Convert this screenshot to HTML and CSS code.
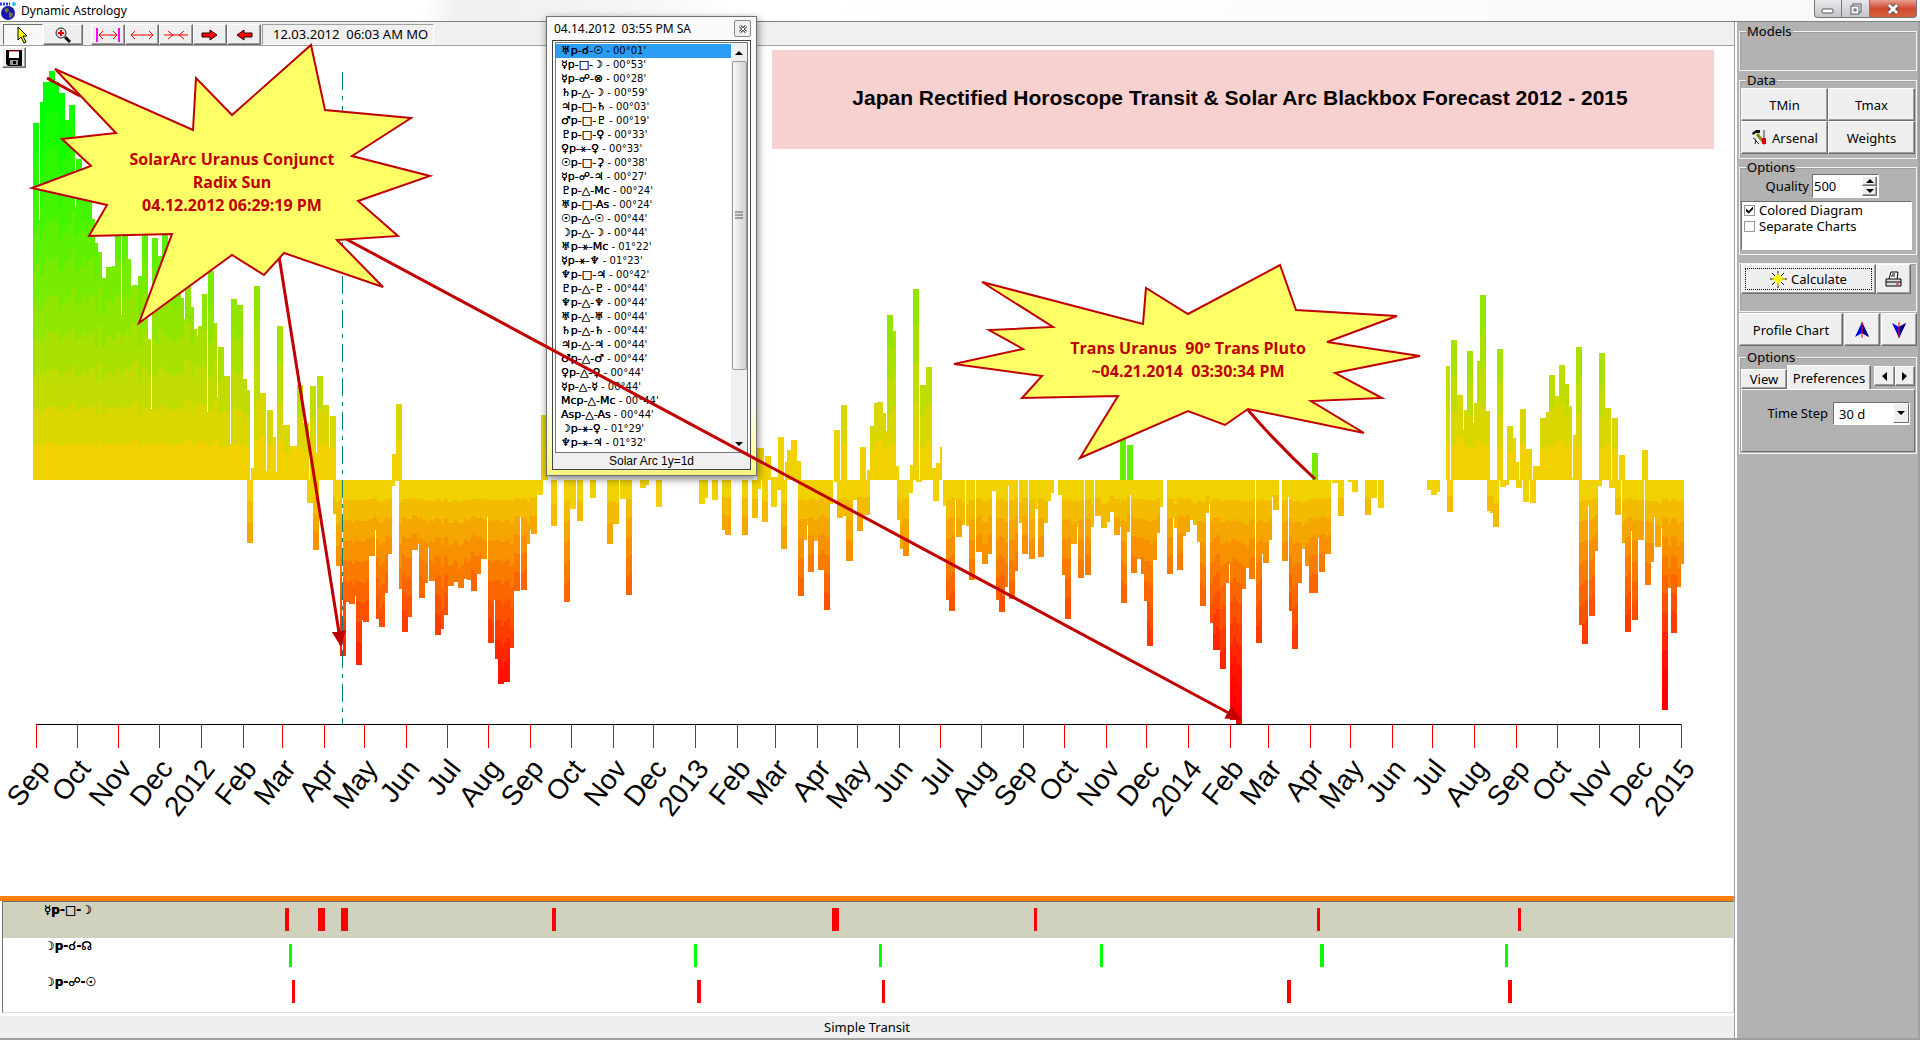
FILE: index.html
```html
<!DOCTYPE html>
<html lang="en">
  <head>
    <meta charset="utf-8">
    <meta name="viewport" content="width=device-width, initial-scale=1">
    <title>Dynamic Astrology</title>
    <link rel="stylesheet" href="styles.css">
    <script src="chart.js" defer></script>
  </head>
  <body>
    <header class="titlebar">
      <svg class="app-icon" width="16" height="18" viewBox="0 0 16 18"><circle cx="8" cy="11" r="7" fill="#1414b8"/><path d="M4 7l4-1 1 3-3 2zM9 10l4 1-1 4-3 1z" fill="#7a7a20"/><path d="M0 2h10" stroke="#2a40e0" stroke-width="3" stroke-dasharray="2 1"/><circle cx="14" cy="2" r="2" fill="#20c8f0"/></svg>
      <span class="app-name">Dynamic Astrology</span>
      <div class="window-buttons">
        <button type="button" aria-label="Minimize"><svg width="14" height="12" viewBox="0 0 14 12"><rect x="1" y="6" width="11" height="4" rx="1" fill="#fff" stroke="#556"/></svg></button>
        <button type="button" aria-label="Restore"><svg width="14" height="12" viewBox="0 0 14 12"><rect x="4" y="1" width="8" height="8" fill="#fff" stroke="#556"/><rect x="2" y="3" width="8" height="8" fill="#fff" stroke="#556"/><rect x="5" y="6" width="2" height="2" fill="none" stroke="#556"/></svg></button>
        <button type="button" class="close" aria-label="Close"><svg width="14" height="12" viewBox="0 0 14 12"><path d="M3 2l8 8M11 2l-8 8" stroke="#544" stroke-width="5"/><path d="M3 2l8 8M11 2l-8 8" stroke="#fff" stroke-width="3"/></svg></button>
      </div>
    </header>
    <div class="workspace">
      <main class="main">
        <div class="toolbar">
          <button type="button" class="tool wide pressed" aria-label="Select"><svg width="12" height="18" viewBox="0 0 12 18"><path d="M1 1v13l3-3 3 6 2-1-3-6h4z" fill="#ff0" stroke="#000"/></svg></button>
          <button type="button" class="tool wide" aria-label="Zoom"><svg width="18" height="18" viewBox="0 0 18 18"><circle cx="7" cy="7" r="5" fill="#ddd" stroke="#222"/><path d="M7 4v6M4 7h6" stroke="#e00" stroke-width="2"/><path d="M11 11l5 5" stroke="#111" stroke-width="3"/></svg></button>
          <span class="tool-gap"></span>
          <button type="button" class="tool" aria-label="Fit range"><svg width="26" height="16" viewBox="0 0 26 16"><path d="M2 1v14M24 1v14" stroke="#f0f" stroke-width="2"/><path d="M4 8h18M8 4L4 8l4 4M18 4l4 4-4 4" fill="none" stroke="#f00"/></svg></button>
          <button type="button" class="tool" aria-label="Expand"><svg width="26" height="16" viewBox="0 0 26 16"><path d="M2 8h22M6 4L2 8l4 4M20 4l4 4-4 4" fill="none" stroke="#f00"/></svg></button>
          <button type="button" class="tool" aria-label="Shrink"><svg width="26" height="16" viewBox="0 0 26 16"><path d="M1 8h24M5 4l5 4-5 4M21 4l-5 4 5 4" fill="none" stroke="#f00"/></svg></button>
          <button type="button" class="tool" aria-label="Next"><svg width="18" height="12" viewBox="0 0 18 12"><path d="M1 4h8V1l7 5-7 5V8H1z" fill="#f00" stroke="#200"/></svg></button>
          <button type="button" class="tool" aria-label="Previous"><svg width="18" height="12" viewBox="0 0 18 12"><path d="M17 4H9V1L2 6l7 5V8h8z" fill="#f00" stroke="#200"/></svg></button>
          <div class="cursor-date">12.03.2012&nbsp; 06:03 AM MO</div>
        </div>
        <section class="diagram">
          <svg class="plot" id="plot" viewBox="0 46 1734 850" preserveAspectRatio="xMinYMin meet"></svg>
          <button type="button" class="tool save" aria-label="Save"><svg width="16" height="16" viewBox="0 0 16 16"><path d="M0 0h16v16H2l-2-2z" fill="#000"/><rect x="3" y="1" width="10" height="7" fill="#fff"/><path d="M3 1h10" stroke="#c00"/><rect x="4" y="10" width="8" height="5" fill="#999"/><rect x="7" y="11" width="3" height="3" fill="#000"/></svg></button>
          <h1 class="banner">Japan Rectified Horoscope Transit &amp; Solar Arc Blackbox Forecast 2012 - 2015</h1>
          <svg class="notes" viewBox="0 46 1734 850" preserveAspectRatio="xMinYMin meet">
            <defs>
              <marker id="tip" markerUnits="userSpaceOnUse" markerWidth="16" markerHeight="14" refX="14" refY="7" orient="auto"><path d="M0 0l16 7-16 7z" fill="#c00000"/></marker>
            </defs>
            <g class="pointer">
              <path d="M47 78L80 96"/>
              <path d="M279 256L341 645" marker-end="url(#tip)"/>
              <path d="M346 239L1240 719" marker-end="url(#tip)"/>
              <path d="M1248 410Q1278 445 1315 479"/>
            </g>
            <polygon class="burst" points="311,45 325,110 411,118 352,156 430,176 358,201 398,236 337,240 383,287 284,253 264,275 232,255 139,323 172,234 89,236 107,205 32,188 91,166 62,139 116,133 55,69 193,130 196,78 232,115"/>
            <polygon class="burst" points="1280,265 1296,310 1397,316 1327,342 1420,356 1335,373 1382,398 1311,401 1364,433 1248,409 1225,425 1188,411 1080,458 1118,396 1022,398 1042,376 954,364 1023,349 989,330 1053,327 982,282 1143,324 1146,288 1188,314"/>
            <g class="burst-text">
              <text x="232" y="165">SolarArc Uranus Conjunct</text>
              <text x="232" y="188">Radix Sun</text>
              <text x="232" y="211">04.12.2012 06:29:19 PM</text>
              <text x="1188" y="354">Trans Uranus &#160;90° Trans Pluto</text>
              <text x="1188" y="377">~04.21.2014 &#160;03:30:34 PM</text>
            </g>
          </svg>
        </section>
        <div class="splitter"></div>
        <section class="tracks" id="tracks"></section>
        <footer class="status">Simple Transit</footer>
      </main>

      <aside class="side">
        <fieldset class="group models"><legend>Models</legend></fieldset>
        <fieldset class="group data"><legend>Data</legend>
          <div class="button-grid">
            <button type="button">TMin</button>
            <button type="button">Tmax</button>
            <button type="button"><svg width="17" height="17" viewBox="0 0 17 17"><path d="M1 4l4-3h4v3H5L2 6z" fill="#111"/><path d="M6 5l8 10" stroke="#8a8a10" stroke-width="3"/><path d="M13 1v9" stroke="#333"/><path d="M13 9v6" stroke="#d00" stroke-width="4"/><path d="M2 9l3 2-1 4M4 11l4 4" stroke="#222" fill="none"/></svg>Arsenal</button>
            <button type="button">Weights</button>
          </div>
        </fieldset>
        <fieldset class="group options"><legend>Options</legend>
          <div class="quality">
            <label for="quality">Quality</label>
            <span class="spin">
              <input id="quality" type="text" value="500">
              <span class="spin-buttons">
                <button type="button" aria-label="Increase"><svg width="8" height="4" viewBox="0 0 8 4"><path d="M4 0l4 4H0z"/></svg></button>
                <button type="button" aria-label="Decrease"><svg width="8" height="4" viewBox="0 0 8 4"><path d="M0 0h8L4 4z"/></svg></button>
              </span>
            </span>
          </div>
          <div class="checks">
            <label><input type="checkbox" checked>Colored Diagram</label>
            <label><input type="checkbox">Separate Charts</label>
          </div>
        </fieldset>
        <div class="group run">
          <button type="button" class="calculate"><svg width="17" height="17" viewBox="0 0 17 17"><path d="M8 0v17M0 8h17M2 2l12 12M14 2L2 14" stroke="#111"/><path d="M8 2v13M2 8h13" stroke="#ff0"/><circle cx="8" cy="8" r="4" fill="#ff0"/></svg>Calculate</button>
          <button type="button" class="print" aria-label="Print"><svg width="17" height="17" viewBox="0 0 17 17"><path d="M4 8l2-7h7l-1 7" fill="#fff" stroke="#000"/><path d="M7 3h3M6 5h4" stroke="#000"/><path d="M1 8h15v7H1z" fill="#ddd" stroke="#000"/><path d="M1 11h15" stroke="#000"/><path d="M11 13h3" stroke="#d00"/></svg></button>
        </div>
        <div class="profile">
          <button type="button">Profile Chart</button>
          <button type="button" aria-label="Up"><svg width="16" height="18" viewBox="0 0 16 18"><path d="M8 1l7 15-7-4-7 4z" fill="#00f"/><path d="M8 1l7 15-7-4z" fill="#000080"/><path d="M8 1v16" stroke="#f00"/></svg></button>
          <button type="button" aria-label="Down"><svg width="16" height="18" viewBox="0 0 16 18"><path d="M8 17l7-15-7 4-7-4z" fill="#00f"/><path d="M8 17l7-15-7 4z" fill="#000080"/><path d="M8 1v16" stroke="#f00"/></svg></button>
        </div>
        <fieldset class="group prefs"><legend>Options</legend>
          <div class="tabs">
            <button type="button" class="tab">View</button>
            <button type="button" class="tab active">Preferences</button>
            <button type="button" class="arrow" aria-label="Scroll left"><svg width="5" height="9" viewBox="0 0 5 9"><path d="M5 0v9L0 4z"/></svg></button>
            <button type="button" class="arrow" aria-label="Scroll right"><svg width="5" height="9" viewBox="0 0 5 9"><path d="M0 0v9l5-5z"/></svg></button>
          </div>
          <div class="tab-page">
            <label for="step">Time Step</label>
            <span class="combo">
              <select id="step"><option>30 d</option></select>
              <span class="combo-arrow"><svg width="8" height="4" viewBox="0 0 8 4"><path d="M0 0h8L4 4z"/></svg></span>
            </span>
          </div>
        </fieldset>
      </aside>
    </div>

    <section class="aspects">
      <header class="aspects-head"><span>04.14.2012&nbsp; 03:55 PM SA</span><button type="button" aria-label="Close list"><svg width="8" height="8" viewBox="0 0 8 8"><path d="M1 1l6 6M7 1L1 7" stroke="#555" stroke-width="3"/><path d="M1 1l6 6M7 1L1 7" stroke="#fff"/></svg></button></header>
      <div class="aspects-body">
        <div class="aspects-view">
          <ul class="aspects-list" id="aspects"></ul>
          <div class="scrollbar"><svg width="8" height="4" viewBox="0 0 8 4"><path d="M4 0l4 4H0z"/></svg><div class="thumb"><svg width="8" height="9" viewBox="0 0 8 9"><path d="M0 1h8M0 4h8M0 7h8" stroke="#555"/></svg></div><svg width="8" height="4" viewBox="0 0 8 4"><path d="M0 0h8L4 4z"/></svg></div>
        </div>
        <footer class="aspects-foot">Solar Arc 1y=1d</footer>
      </div>
    </section>
  </body>
</html>
```

FILE: styles.css
```css
:root {
  --face: #efefef;
  --side: #b2b2b2;
  --dark: #6d6d6d;
  --mid: #a0a0a0;
  --accent: #c00000;
}
* {
  box-sizing: border-box;
}
body {
  display: flex;
  flex-direction: column;
  height: 100vh;
  margin: 0;
  overflow: hidden;
  font-family: Tahoma, "Noto Sans", sans-serif;
  font-size: 13px;
  line-height: 16px;
  color: #000;
  background-color: #fff;
}
button,
input,
select {
  margin: 0;
  padding: 0;
  font: inherit;
  color: #000;
}
button {
  display: flex;
  align-items: center;
  justify-content: center;
  gap: 4px;
  background-color: var(--face);
  border: 1px solid;
  border-color: #fff var(--dark) var(--dark) #fff;
  box-shadow: inset -1px -1px var(--mid);
}
.titlebar {
  display: flex;
  gap: 5px;
  height: 22px;
  padding-right: 3px;
  background: linear-gradient(100deg, #fff 0, #fff 22%, #f0f0f0 24%, #f4f4f4 32%, #fff 38%, #f8f8f8 100%);
  border-bottom: 1px solid #808080;
}
.app-icon {
  margin-top: 2px;
}
.app-name {
  flex: 1;
  font-size: 12px;
  line-height: 22px;
}
.window-buttons {
  display: flex;
  height: 18px;
}
.window-buttons button {
  width: 28px;
  background: linear-gradient(#e8e8ea, #c4c6ca);
  border-color: #777;
  border-top: 0;
  border-radius: 0 0 0 4px;
  box-shadow: none;
}
.window-buttons button + button {
  border-left: 0;
  border-radius: 0;
}
.window-buttons .close {
  width: 47px;
  background: linear-gradient(#e8a090, #d04a30 50%, #d8603c);
  border-radius: 0 0 4px 0;
}
.workspace {
  display: flex;
  flex: 1;
  min-height: 0;
}
.main {
  display: flex;
  flex: 1;
  flex-direction: column;
  min-width: 0;
}
.toolbar {
  display: flex;
  height: 24px;
  padding: 2px 0 0 3px;
  background-color: #f0f0f0;
  border-bottom: 1px solid var(--mid);
}
.tool {
  width: 34px;
  height: 21px;
}
.tool.wide {
  width: 40px;
}
.tool.pressed {
  background-color: #f8f8f8;
  border-color: var(--dark) #fff #fff var(--dark);
  box-shadow: none;
}
.tool-gap {
  width: 8px;
}
.cursor-date {
  width: 172px;
  margin-left: 1px;
  padding-left: 10px;
  line-height: 18px;
  border: 1px solid;
  border-color: var(--mid) #fff #fff var(--mid);
}
.diagram {
  position: relative;
  flex: 1;
  min-height: 0;
}
.plot,
.notes {
  display: block;
  width: 100%;
  height: 100%;
}
.plot {
  shape-rendering: crispEdges;
}
.plot text {
  font-family: Arial, "Liberation Sans", sans-serif;
  font-size: 28px;
  text-anchor: end;
}
.notes {
  position: absolute;
  z-index: 3;
  top: 0;
  left: 0;
  overflow: visible;
  pointer-events: none;
}
.pointer {
  fill: none;
  stroke: var(--accent);
  stroke-width: 3;
}
.burst {
  fill: #ffff66;
  stroke: var(--accent);
  stroke-width: 2;
}
.burst-text {
  font-family: "Comic Sans MS", "Open Sans", sans-serif;
  font-size: 16px;
  font-weight: bold;
  text-anchor: middle;
  fill: var(--accent);
}
.save {
  position: absolute;
  top: 1px;
  left: 2px;
  width: 24px;
}
.banner {
  position: absolute;
  top: 4px;
  right: 20px;
  width: 942px;
  margin: 0;
  padding: 36px 6px 39px 0;
  font-family: Arial, "Liberation Sans", sans-serif;
  font-size: 21px;
  line-height: 24px;
  text-align: center;
  background-color: #f7d0d0;
}
.splitter {
  height: 5px;
  background-color: #ff8000;
}
.tracks {
  margin-left: 2px;
  padding-bottom: 2px;
  border: 1px solid;
  border-color: var(--dark) #ddd #ddd var(--dark);
}
.track {
  position: relative;
  height: 36px;
  padding-left: 41px;
  font-family: "DejaVu Sans", sans-serif;
  font-size: 12px;
  font-weight: bold;
  text-shadow: 0 0 #000;
}
.track.selected {
  background-color: #d0d2be;
}
.track svg {
  position: absolute;
  top: 0;
  left: 0;
  width: 100%;
  height: 100%;
}
.status {
  height: 24px;
  margin-top: 3px;
  line-height: 22px;
  text-align: center;
  background-color: var(--face);
  border-bottom: 2px solid var(--mid);
}
.side {
  display: flex;
  flex-direction: column;
  width: 186px;
  padding: 1px 1px 0 4px;
  background-color: var(--side);
  border: 2px solid var(--mid);
  border-width: 0 2px 2px 1px;
  box-shadow: inset 2px 0 #fff;
}
.group {
  min-width: 0;
  margin: 0 0 9px;
  padding: 0 1px;
  border: 1px solid #f4f4f4;
  box-shadow: inset 1px 1px var(--mid);
}
.group legend {
  height: 16px;
  margin-left: 5px;
  padding: 0 1px;
}
.models {
  height: 48px;
  margin-bottom: 1px;
}
.data {
  height: 87px;
  margin-bottom: 0;
}
.button-grid {
  display: grid;
  grid-template-columns: 1fr 1fr;
  grid-auto-rows: 33px;
}
.options {
  height: 96px;
  margin-bottom: 8px;
}
.quality {
  display: flex;
  gap: 3px;
  justify-content: flex-end;
  margin: -1px 36px 3px 0;
  line-height: 24px;
}
.spin {
  display: flex;
  width: 67px;
  height: 24px;
  padding: 1px;
  background-color: #fff;
  border: 1px solid;
  border-color: var(--dark) #fff #fff var(--dark);
}
.spin input {
  width: 48px;
  border: 0;
}
.spin-buttons button {
  width: 15px;
  height: 10px;
}
.checks {
  height: 49px;
  margin-right: 3px;
  padding: 0 2px;
  background-color: #fff;
  border: 1px solid;
  border-color: var(--dark) #fff #fff var(--dark);
}
.checks label {
  display: flex;
  gap: 4px;
  align-items: center;
}
.checks input {
  width: 11px;
  height: 11px;
  appearance: none;
  background-color: #fff;
  border: 1px solid #999;
}
.checks input:checked::before {
  display: block;
  width: 7px;
  height: 7px;
  margin: 1px;
  clip-path: polygon(0 30%, 40% 65%, 100% 0, 100% 40%, 40% 100%, 0 70%);
  content: "";
  background-color: #000;
}
.run {
  display: flex;
  height: 49px;
  margin-bottom: 1px;
}
.run button {
  height: 30px;
}
.calculate {
  width: 135px;
  outline: 1px dotted #000;
  outline-offset: -5px;
}
.run .print {
  width: 35px;
}
.profile {
  display: flex;
  gap: 1px;
  margin-bottom: 3px;
}
.profile button {
  flex: 1;
  height: 33px;
}
.profile button:first-child {
  flex: 3;
}
.prefs {
  height: 105px;
}
.tabs {
  display: flex;
  align-items: flex-end;
  height: 24px;
}
.tab {
  width: 46px;
  height: 20px;
}
.tab.active {
  width: 84px;
  height: 24px;
  margin-right: 3px;
  border-bottom: 0;
  box-shadow: inset -1px 0 var(--mid);
}
.arrow {
  flex: 1;
  height: 20px;
  margin-bottom: 3px;
}
.tab-page {
  display: flex;
  gap: 5px;
  justify-content: flex-end;
  height: 63px;
  padding: 12px 4px;
  line-height: 22px;
  border: 1px solid;
  border-color: #fff var(--dark) var(--dark) #fff;
}
.combo {
  position: relative;
  width: 77px;
  height: 23px;
  background-color: #fff;
  border: 1px solid;
  border-color: var(--dark) #fff #fff var(--dark);
}
.combo select {
  width: 100%;
  height: 100%;
  padding-left: 5px;
  appearance: none;
  background: none;
  border: 0;
}
.combo-arrow {
  position: absolute;
  top: 0;
  right: 0;
  display: flex;
  align-items: center;
  justify-content: center;
  width: 16px;
  height: 20px;
  background-color: var(--face);
  border: 1px solid;
  border-color: #fff var(--dark) var(--dark) #fff;
  pointer-events: none;
}
.aspects {
  position: absolute;
  z-index: 2;
  top: 16px;
  left: 546px;
  width: 211px;
  padding: 0 5px 5px;
  background: linear-gradient(#fafafa 0, #fafafa 85%, #ffff9a 96%, #f4f080);
  border: 1px solid #707070;
  box-shadow: 1px 3px 8px rgba(0, 0, 0, .5);
}
.aspects-head {
  display: flex;
  align-items: center;
  justify-content: space-between;
  height: 23px;
  padding-left: 2px;
  font-size: 12px;
}
.aspects-head button {
  width: 17px;
  height: 17px;
  border-color: #888;
  border-radius: 2px;
  box-shadow: none;
}
.aspects-body {
  border: 1px solid #444;
  background-color: #fff;
}
.aspects-view {
  display: flex;
  height: 411px;
  margin: 1px 2px 0;
  border: 1px solid #777;
}
.aspects-list {
  flex: 1;
  margin: 1px 0 0;
  padding: 0;
  overflow: hidden;
  font-family: "DejaVu Sans", sans-serif;
  font-size: 10px;
  line-height: 14px;
  list-style: none;
}
.aspects-list li {
  height: 14px;
  padding-left: 5px;
  white-space: pre;
}
.aspects-list b {
  font-size: 11px;
  font-weight: normal;
  text-shadow: 0 0 #000;
}
.aspects-list .selected {
  background-color: #2b9df6;
}
.scrollbar {
  display: flex;
  flex-direction: column;
  align-items: center;
  width: 16px;
  padding: 8px 0 6px;
  background-color: #f0f0f0;
}
.thumb {
  display: flex;
  align-items: center;
  justify-content: center;
  width: 15px;
  height: 309px;
  margin: 6px 0 auto;
  background: linear-gradient(90deg, #f8f8f8, #d0d0d4);
  border: 1px solid #999;
  border-radius: 2px;
}
.aspects-foot {
  font-family: Arial, "Liberation Sans", sans-serif;
  font-size: 12px;
  line-height: 16px;
  text-align: center;
  background-color: #f0f0f0;
}
```

FILE: chart.js
```js
const SVG = 'http://www.w3.org/2000/svg'
const plot = document.querySelector('#plot')
const ZERO = 480

// each entry: left, right, end of the bar
const up = [
  [33,39,123],[39,40,220],[40,43,102],[43,49,82],[49,55,71],[55,59,82],[59,65,93],[65,69,120],[69,75,105],[75,76,207],
  [76,82,159],[82,92,190],[92,95,219],[95,98,243],[98,102,252],[102,106,278],[106,112,267],[112,115,266],[115,121,225],
  [121,122,315],[122,128,225],[128,131,259],[131,132,287],[132,138,285],[138,142,276],[142,148,225],[148,151,339],
  [151,152,409],[152,158,238],[158,162,256],[162,168,225],[168,181,270],[181,184,298],[184,185,319],[185,191,285],
  [191,194,307],[194,197,329],[197,198,336],[198,202,326],[202,207,294],[207,208,412],[208,214,271],[214,217,323],
  [217,218,397],[218,224,347],[224,230,376],[230,231,444],[231,237,299],[237,243,305],[243,247,379],[247,250,390],
  [251,254,468],[254,260,286],[260,266,393],[266,267,471],[267,273,410],[273,276,437],[276,277,472],[277,283,326],
  [283,290,425],[290,297,446],[297,303,385],[303,309,423],[310,316,386],[316,317,453],[317,323,376],[323,329,405],
  [329,330,448],[330,336,416],[392,396,454],[396,402,404],[541,548,415],
  [757,764,448],[764,765,465],[765,771,456],[771,778,477],[778,784,437],[785,787,462],[787,791,450],[791,797,440],
  [797,801,461],[834,840,430],[841,847,405],[860,866,447],[867,870,470],[870,874,426],[874,877,403],[877,883,402],
  [883,886,413],[886,887,431],[887,893,315],[893,896,331],[896,899,466],[910,913,465],[913,919,289],[920,926,385],
  [926,932,367],[932,936,468],[936,940,463],[940,942,447],
  [1446,1450,366],[1451,1457,340],[1457,1463,395],[1463,1464,429],[1464,1467,410],[1467,1473,351],[1473,1474,423],
  [1474,1477,403],[1477,1480,361],[1480,1486,295],[1486,1490,411],[1497,1503,349],[1507,1513,426],[1513,1516,438],
  [1516,1519,462],[1520,1526,409],[1526,1532,449],[1533,1540,466],[1540,1546,418],[1546,1549,412],[1549,1555,375],
  [1555,1559,396],[1559,1565,365],[1565,1569,384],[1569,1572,406],[1572,1573,478],[1573,1576,435],[1576,1582,347],
  [1599,1605,353],[1605,1611,408],[1612,1618,418],[1619,1625,455],[1642,1648,450]
]
const down = [
  [247,253,543],[307,313,503],[313,319,550],[333,336,514],[336,340,566],[340,342,656],[343,346,656],[346,349,602],
  [349,355,604],[355,356,596],[356,362,665],[362,363,620],[363,369,622],[369,375,556],[375,376,530],[376,379,619],
  [379,385,627],[385,388,593],[388,392,554],[392,395,486],[395,399,481],[399,402,589],[402,408,632],[408,412,617],
  [412,418,550],[418,419,544],[419,425,598],[425,428,583],[428,429,548],[429,435,581],[435,441,635],[441,444,629],
  [444,448,615],[448,454,586],[454,458,582],[458,464,588],[464,467,579],[467,471,580],[471,477,591],[477,481,574],
  [481,487,559],[487,488,517],[488,494,643],[494,495,600],[495,498,659],[498,504,684],[504,510,682],[510,514,648],
  [514,520,591],[520,521,517],[521,527,590],[527,530,544],[530,531,530],[531,537,534],[537,543,495],[551,557,526],
  [564,570,602],[570,576,509],[577,583,521],[590,596,498],[607,613,544],[613,619,524],[620,626,499],[626,632,595],
  [640,646,488],[646,649,485],[656,662,507],[699,705,504],[705,708,498],[712,718,500],[722,725,530],[725,731,535],
  [742,748,535],[752,758,518],[758,761,489],[762,768,522],[771,777,507],[777,781,490],[781,787,549],[798,804,596],
  [804,807,540],[807,808,525],[808,814,572],[814,818,541],[818,824,570],[824,830,610],[830,833,504],[834,837,482],
  [837,843,518],[843,846,516],[846,853,561],[853,857,500],[857,863,531],[863,870,515],[897,900,520],[900,903,549],
  [903,909,556],[909,913,493],[916,922,482],[933,939,501],
  [943,946,506],[946,949,600],[949,955,611],[955,956,500],[956,962,537],[962,965,525],[966,969,526],[969,975,580],
  [976,982,552],[982,988,564],[988,992,554],[992,996,491],[996,999,600],[999,1005,612],[1005,1008,587],[1008,1009,486],
  [1009,1015,599],[1015,1018,571],[1019,1022,523],[1022,1028,554],[1029,1035,559],[1035,1038,509],[1038,1044,557],
  [1044,1048,523],[1048,1051,501],[1051,1054,493],[1058,1062,495],[1062,1065,575],[1065,1071,619],[1071,1077,544],
  [1077,1078,527],[1078,1084,578],[1085,1091,575],[1091,1094,527],[1095,1101,516],[1101,1107,528],[1107,1110,522],
  [1110,1114,512],[1114,1120,535],[1120,1121,527],[1121,1127,603],[1127,1130,532],[1130,1131,495],[1131,1137,573],
  [1137,1141,559],[1141,1144,574],[1144,1147,601],[1147,1153,646],[1153,1157,560],[1157,1160,533],[1160,1163,507],
  [1167,1173,574],[1173,1174,518],[1174,1177,528],[1177,1183,570],[1183,1186,536],[1186,1190,532],[1190,1193,520],
  [1193,1197,525],[1197,1200,542],[1200,1206,606],[1206,1209,513],[1209,1210,504],[1210,1213,623],[1213,1220,650],
  [1220,1226,669],[1226,1229,583],[1229,1230,564],[1230,1236,720],[1236,1242,724],[1242,1246,589],[1246,1249,568],
  [1249,1255,579],[1256,1262,643],[1262,1263,554],[1263,1269,563],[1269,1272,540],[1272,1273,497],[1273,1279,510],
  [1282,1288,561],[1288,1289,497],[1289,1292,611],[1292,1298,649],[1298,1302,583],[1302,1305,549],[1305,1309,566],
  [1309,1318,593],[1318,1319,538],[1319,1325,572],[1325,1331,554],[1332,1338,483],[1338,1344,516],[1348,1352,482],
  [1352,1358,492],[1365,1371,515],[1371,1377,498],[1378,1384,508],[1427,1431,490],[1431,1437,495],[1437,1440,492],
  [1447,1453,512],[1487,1490,511],[1490,1493,513],[1493,1499,527],[1500,1506,487],[1506,1509,485],[1516,1522,488],
  [1523,1529,502],[1530,1536,503],[1579,1582,625],[1582,1588,644],[1588,1589,506],[1589,1595,616],[1595,1598,551],
  [1598,1602,486],[1609,1615,488],[1615,1621,515],[1622,1625,543],[1625,1631,632],[1631,1632,531],[1632,1638,620],
  [1638,1644,540],[1645,1651,585],[1651,1654,562],[1654,1655,517],[1655,1661,547],[1661,1662,528],[1662,1668,710],
  [1668,1671,588],[1671,1677,633],[1677,1681,587],[1681,1684,564]
]
const upColors = ['#f1d200','#dad700','#c1dc00','#a9e100','#90e600','#77eb00','#5ef000','#45f400','#2df800','#16fc00','#05ff00','#00ff00']
const downColors = ['#f1d200','#f3bc00','#f5a600','#f79100','#f97b00','#fb6600','#fc5100','#fd3c00','#fe2600','#ff1200','#ff0800','#ff0000']

function add(parent, name, attrs, text) {
  const el = document.createElementNS(SVG, name)
  for (const key in attrs) el.setAttribute(key, attrs[key])
  if (text) el.textContent = text
  parent.appendChild(el)
  return el
}

// split a bar in equal bands, one colour for each level away from zero
function drawBar(x0, x1, end, step, colors) {
  const height = Math.abs(end - ZERO)
  const count = Math.max(1, Math.round(height / step))
  for (let x = x0; x < x1; x += 3) {
    const band = height / count * (1 + Math.sin(x * 7) / 40)
    const w = Math.min(3, x1 - x)
    for (let i = 0; i < count; i++) {
      const from = Math.min(height, Math.round(i * band))
      const to = i === count - 1 ? height : Math.min(height, Math.round((i + 1) * band))
      if (to <= from) continue
      const y = end < ZERO ? ZERO - to : ZERO + from
      add(plot, 'rect', {x, y, width: w, height: to - from, fill: colors[Math.min(i, colors.length - 1)]})
    }
  }
}

up.forEach(b => drawBar(b[0], b[1], b[2], 36, upColors))
down.forEach(b => drawBar(b[0], b[1], b[2], 20, downColors))
add(plot, 'rect', {x: 1120, y: 436, width: 6, height: 44, fill: '#6aee00'})
add(plot, 'rect', {x: 1127, y: 445, width: 6, height: 35, fill: '#5ef000'})
add(plot, 'rect', {x: 1312, y: 453, width: 6, height: 27, fill: '#77eb00'})

// time axis
add(plot, 'path', {d: 'M342 72V724', stroke: '#008080', 'stroke-dasharray': '18 6 4 6'})
add(plot, 'rect', {x: 36, y: 724, width: 1646, height: 1, fill: '#000'})
const names = ['Jan', 'Feb', 'Mar', 'Apr', 'May', 'Jun', 'Jul', 'Aug', 'Sep', 'Oct', 'Nov', 'Dec']
const start = Date.UTC(2011, 8, 1)
const span = Date.UTC(2015, 0, 1) - start
for (let m = 0; m <= 40; m++) {
  const date = new Date(Date.UTC(2011, 8 + m, 1))
  const x = Math.round(36 + (date - start) / span * 1645)
  const label = date.getUTCMonth() === 0 ? String(date.getUTCFullYear()) : names[date.getUTCMonth()]
  add(plot, 'rect', {x, y: 724, width: 1, height: 24, fill: '#f00'})
  add(plot, 'text', {transform: `translate(${x + 15} 769) rotate(-52)`}, label)
}

// transit tracks: left edge and width of each mark
const tracks = [
  ['☿p-□-☽', '#f00', [[285,4],[318,7],[341,7],[552,4],[832,7],[1034,3],[1317,3],[1518,3]]],
  ['☽p-☌-☊', '#0f0', [[289,3],[694,3],[879,3],[1100,3],[1320,4],[1505,3]]],
  ['☽p-☍-☉', '#f00', [[292,3],[697,4],[882,3],[1287,4],[1508,4]]]
]
tracks.forEach((t, i) => {
  const row = document.createElement('div')
  row.className = i === 0 ? 'track selected' : 'track'
  row.textContent = t[0]
  const svg = add(row, 'svg', {})
  t[2].forEach(m => add(svg, 'rect', {x: `${(m[0] - 3) / 17.3}%`, y: 6, width: m[1], height: 23, fill: t[1]}))
  document.querySelector('#tracks').appendChild(row)
})

const aspects = `♅p-☌-☉ - 00°01'
☿p-□-☽ - 00°53'
☿p-☍-⊗ - 00°28'
♄p-△-☽ - 00°59'
♃p-□-♄ - 00°03'
♂p-□-♇ - 00°19'
♇p-□-♀ - 00°33'
♀p-⚹-♀ - 00°33'
☉p-□-⚳ - 00°38'
☿p-☍-♃ - 00°27'
♇p-△-Mc - 00°24'
♅p-□-As - 00°24'
☉p-△-☉ - 00°44'
☽p-△-☽ - 00°44'
♅p-⚹-Mc - 01°22'
☿p-⚹-♆ - 01°23'
♆p-□-♃ - 00°42'
♇p-△-♇ - 00°44'
♆p-△-♆ - 00°44'
♅p-△-♅ - 00°44'
♄p-△-♄ - 00°44'
♃p-△-♃ - 00°44'
♂p-△-♂ - 00°44'
♀p-△-♀ - 00°44'
☿p-△-☿ - 00°44'
Mcp-△-Mc - 00°44'
Asp-△-As - 00°44'
☽p-⚹-♀ - 01°29'
♆p-⚹-♃ - 01°32'`
aspects.split('\n').forEach((line, i) => {
  const li = document.createElement('li')
  const [pair, orb] = line.split(' - ')
  const symbols = document.createElement('b')
  symbols.textContent = pair
  li.append(symbols, ` - ${orb}`)
  if (i === 0) li.className = 'selected'
  document.querySelector('#aspects').appendChild(li)
})
```
